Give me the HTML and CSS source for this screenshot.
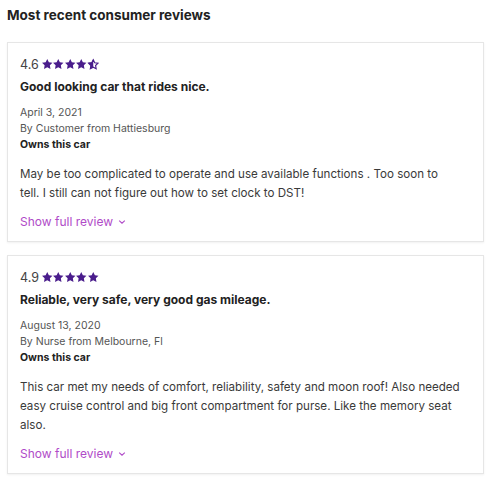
FILE: index.html
```html
<!DOCTYPE html>
<html>
<head>
    <title>Consumer Reviews</title>
    <link rel="stylesheet" href="styles.css">
</head>
<body>
    <h2 class="heading">Most recent consumer reviews</h2>

    <div class="review">
        <div class="rating">
            <span class="score">4.6</span>
            <span class="stars">
                <svg class="star" viewBox="0 0 24 24"><path d="M12 2l3.09 6.26L22 9.27l-5 4.87 1.18 6.88L12 17.77l-6.18 3.25L7 14.14 2 9.27l6.91-1.01L12 2z"/></svg>
                <svg class="star" viewBox="0 0 24 24"><path d="M12 2l3.09 6.26L22 9.27l-5 4.87 1.18 6.88L12 17.77l-6.18 3.25L7 14.14 2 9.27l6.91-1.01L12 2z"/></svg>
                <svg class="star" viewBox="0 0 24 24"><path d="M12 2l3.09 6.26L22 9.27l-5 4.87 1.18 6.88L12 17.77l-6.18 3.25L7 14.14 2 9.27l6.91-1.01L12 2z"/></svg>
                <svg class="star" viewBox="0 0 24 24"><path d="M12 2l3.09 6.26L22 9.27l-5 4.87 1.18 6.88L12 17.77l-6.18 3.25L7 14.14 2 9.27l6.91-1.01L12 2z"/></svg>
                <svg class="star half" viewBox="0 0 24 24">
                    <path class="outline" d="M12 3.5l2.8 5.67 6.2.9-4.5 4.38 1.06 6.18L12 17.7l-5.56 2.93 1.06-6.18L3 10.07l6.2-.9L12 3.5z"/>
                    <path d="M12 2v15.77l-6.18 3.25L7 14.14 2 9.27l6.91-1.01L12 2z"/>
                </svg>
            </span>
        </div>
        <h3 class="title">Good looking car that rides nice.</h3>
        <div class="meta">
            <div>April 3, 2021</div>
            <div>By Customer from Hattiesburg</div>
            <div class="owns">Owns this car</div>
        </div>
        <p class="body">May be too complicated to operate and use available functions . Too soon to<br>tell. I still can not figure out how to set clock to DST!</p>
        <a class="more" href="#">Show full review
            <svg class="chev" viewBox="0 0 10 6"><path d="M1.5 1.2L5 4.5l3.5-3.3"/></svg>
        </a>
    </div>

    <div class="review">
        <div class="rating">
            <span class="score">4.9</span>
            <span class="stars">
                <svg class="star" viewBox="0 0 24 24"><path d="M12 2l3.09 6.26L22 9.27l-5 4.87 1.18 6.88L12 17.77l-6.18 3.25L7 14.14 2 9.27l6.91-1.01L12 2z"/></svg>
                <svg class="star" viewBox="0 0 24 24"><path d="M12 2l3.09 6.26L22 9.27l-5 4.87 1.18 6.88L12 17.77l-6.18 3.25L7 14.14 2 9.27l6.91-1.01L12 2z"/></svg>
                <svg class="star" viewBox="0 0 24 24"><path d="M12 2l3.09 6.26L22 9.27l-5 4.87 1.18 6.88L12 17.77l-6.18 3.25L7 14.14 2 9.27l6.91-1.01L12 2z"/></svg>
                <svg class="star" viewBox="0 0 24 24"><path d="M12 2l3.09 6.26L22 9.27l-5 4.87 1.18 6.88L12 17.77l-6.18 3.25L7 14.14 2 9.27l6.91-1.01L12 2z"/></svg>
                <svg class="star" viewBox="0 0 24 24"><path d="M12 2l3.09 6.26L22 9.27l-5 4.87 1.18 6.88L12 17.77l-6.18 3.25L7 14.14 2 9.27l6.91-1.01L12 2z"/></svg>
            </span>
        </div>
        <h3 class="title">Reliable, very safe, very good gas mileage.</h3>
        <div class="meta">
            <div>August 13, 2020</div>
            <div>By Nurse from Melbourne, Fl</div>
            <div class="owns">Owns this car</div>
        </div>
        <p class="body">This car met my needs of comfort, reliability, safety and moon roof! Also needed easy cruise control and big front compartment for purse. Like the memory seat also.</p>
        <a class="more" href="#">Show full review
            <svg class="chev" viewBox="0 0 10 6"><path d="M1.5 1.2L5 4.5l3.5-3.3"/></svg>
        </a>
    </div>
</body>
</html>
```

FILE: styles.css
```css
body {
    font-family: Inter, "Noto Sans", sans-serif;
    background-color: #fff;
    color: #333;
    margin: 0;
    padding: 6px 8px 0 7px;
}
.heading {
    font-size: 13.5px;
    font-weight: 700;
    color: #222;
    margin: 0 0 18px 0;
    line-height: 18px;
}
.review {
    border: 1px solid #e6e6e6;
    box-shadow: 0 1px 2px rgba(0, 0, 0, 0.06);
    padding: 12px 12px 10px 12px;
    margin-bottom: 13px;
}
.rating {
    display: flex;
    align-items: center;
    height: 18px;
}
.score {
    font-size: 12.5px;
    color: #444;
    margin-right: 2px;
}
.stars {
    display: flex;
}
.star {
    width: 12.5px;
    height: 12.5px;
    margin-right: -1px;
    fill: #4a1d8c;
}
.star .outline {
    fill: none;
    stroke: #4a1d8c;
    stroke-width: 2.2;
}
.title {
    font-size: 12px;
    font-weight: 700;
    color: #222;
    line-height: 18px;
    margin: 5px 0 0 0;
}
.meta {
    font-size: 10.5px;
    line-height: 16px;
    color: #555;
    margin-top: 9px;
}
.owns {
    font-weight: 700;
    color: #222;
}
.body {
    font-size: 11.6px;
    line-height: 19px;
    color: #3a3a3a;
    margin: 12px 0 0 0;
}
.more {
    display: flex;
    align-items: center;
    margin-top: 10px;
    font-size: 12px;
    line-height: 18px;
    color: #b04bc8;
    text-decoration: none;
}
.chev {
    width: 8px;
    height: 6px;
    margin-left: 5px;
    fill: none;
    stroke: #b04bc8;
    stroke-width: 1.4;
}
```
